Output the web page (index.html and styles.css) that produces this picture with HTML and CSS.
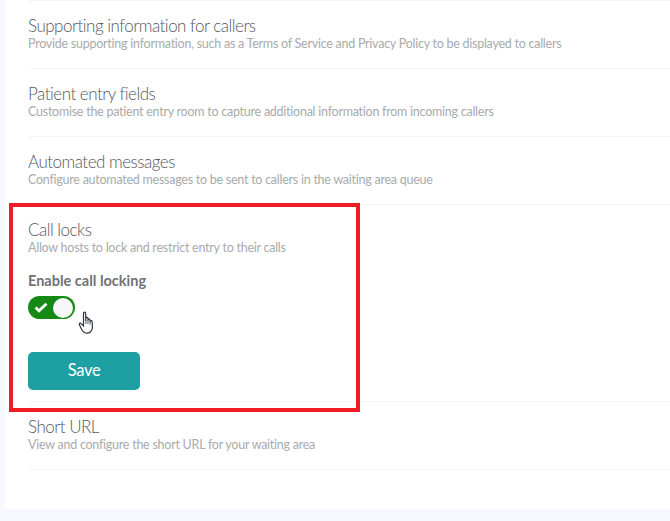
FILE: index.html
```html
<!DOCTYPE html>
<html lang="en">
<head>
<meta charset="utf-8">
<title>Waiting area settings</title>
<link rel="stylesheet" href="styles.css">
</head>
<body>
<main class="card">
  <section class="row">
    <h2 class="title">Supporting information for callers</h2>
    <p class="desc">Provide supporting information, such as a Terms of Service and Privacy Policy to be displayed to callers</p>
  </section>
  <section class="row">
    <h2 class="title">Patient entry fields</h2>
    <p class="desc">Customise the patient entry room to capture additional information from incoming callers</p>
  </section>
  <section class="row">
    <h2 class="title">Automated messages</h2>
    <p class="desc">Configure automated messages to be sent to callers in the waiting area queue</p>
  </section>
  <section class="row row-open">
    <h2 class="title">Call locks</h2>
    <p class="desc">Allow hosts to lock and restrict entry to their calls</p>
    <div class="label">Enable call locking</div>
    <div class="toggle">
      <svg class="check" width="14" height="11" viewBox="0 0 14 11"><path d="M1.500 5.500 5 8.800 12.500 1.800" fill="none" stroke="#fff" stroke-width="2.800"/></svg>
      <span class="knob"></span>
    </div>
    <button class="save" type="button">Save</button>
  </section>
  <section class="row">
    <h2 class="title">Short URL</h2>
    <p class="desc">View and configure the short URL for your waiting area</p>
  </section>
</main>
<div class="highlight"></div>
<svg class="cursor" width="18" height="24" viewBox="0 0 18 24"><path d="M5.500 2.200c0-1.500 2.200-1.500 2.200 0v7l.2-2c.2-1.200 2-1.100 2.100.1v1.600c.2-1.100 2-1 2.100.2v1.200c.3-1 2-.8 2.100.4l.2 5.200c.1 3-1.700 6.300-5.200 6.300-3 0-4.300-1.500-5.500-3.700L1.300 13.600c-.6-1.200 1-2.100 1.900-1l2.300 2.600z" fill="#fff" stroke="#2f3540" stroke-width="1.200" stroke-linejoin="round"/><path d="M8 9v4M10 9v4M12.100 10v3.500" fill="none" stroke="#2f3540" stroke-width=".8"/></svg>
</body>
</html>
```
FILE: styles.css
```css
* { box-sizing: border-box; }
html, body { height: 100%; }
body {
  margin: 0;
  height: 521px;
  overflow: hidden;
  background: #f8f9fe;
  font-family: Lato, "Open Sans", sans-serif;
  position: relative;
}
.card {
  margin-left: 5px;
  height: 509px;
  padding: 0 0 0 23px;
  background: #fff;
}
.row {
  height: 68px;
  padding-top: 16px;
  border-top: 1px solid #f5f5f5;
}
.row:last-child { border-bottom: 1px solid #f5f5f5; height: 69px; }
.row-open { height: 197px; }
.title {
  margin: 0;
  font-size: 17px;
  line-height: 18px;
  font-weight: 300;
  letter-spacing: -0.5px;
  color: #55585e;
}
.desc {
  margin: 1px 0 0;
  font-size: 12.500px;
  line-height: 15px;
  font-weight: 400;
  letter-spacing: -0.25px;
  color: #a8abac;
}
.label {
  margin-top: 17px;
  font-size: 14.500px;
  line-height: 17px;
  font-weight: 700;
  color: #707277;
}
.toggle {
  width: 47px;
  height: 23px;
  margin-top: 7px;
  padding: 0 2px 0 6px;
  border-radius: 12px;
  background: #148a14;
  display: flex;
  align-items: center;
  justify-content: space-between;
}
.knob {
  width: 20px;
  height: 20px;
  border-radius: 50%;
  background: #f7f7f7;
}
.save {
  display: block;
  width: 112px;
  height: 38px;
  margin-top: 33px;
  padding: 0 0 2px;
  border: 0;
  border-radius: 5px;
  background: #1e9fa2;
  color: #fff;
  font-family: inherit;
  font-size: 16.500px;
  font-weight: 400;
  letter-spacing: -0.3px;
}
.highlight {
  position: absolute;
  left: 9px;
  top: 203px;
  width: 351px;
  height: 209px;
  border: 4px solid #ee1c25;
}
.cursor {
  position: absolute;
  left: 78px;
  top: 311px;
}
```
